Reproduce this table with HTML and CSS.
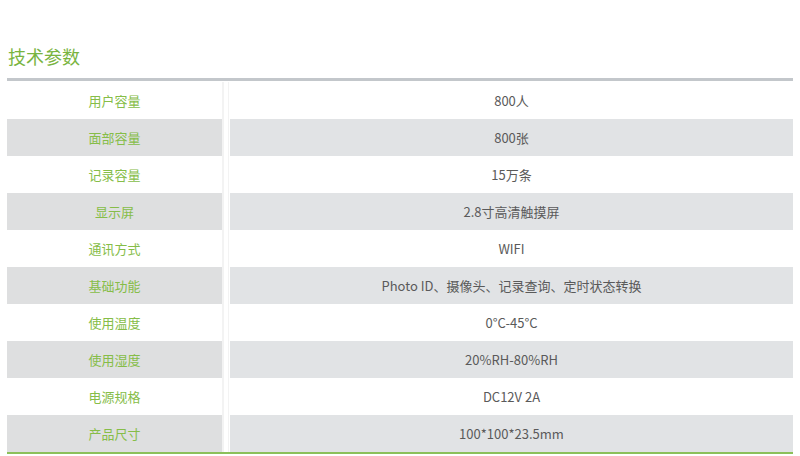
FILE: index.html
```html
<!DOCTYPE html>
<html lang="zh">
<head>
<meta charset="utf-8">
<link rel="stylesheet" href="styles.css">
</head>
<body>
<div class="page">
  <h2 class="title">技术参数</h2>
  <div class="table">
    <div class="row"><div class="key">用户容量</div><div class="sep"></div><div class="val">800人</div></div>
    <div class="row alt"><div class="key">面部容量</div><div class="sep"></div><div class="val">800张</div></div>
    <div class="row"><div class="key">记录容量</div><div class="sep"></div><div class="val">15万条</div></div>
    <div class="row alt"><div class="key">显示屏</div><div class="sep"></div><div class="val">2.8寸高清触摸屏</div></div>
    <div class="row"><div class="key">通讯方式</div><div class="sep"></div><div class="val">WIFI</div></div>
    <div class="row alt"><div class="key">基础功能</div><div class="sep"></div><div class="val">Photo ID、摄像头、记录查询、定时状态转换</div></div>
    <div class="row"><div class="key">使用温度</div><div class="sep"></div><div class="val">0°C-45°C</div></div>
    <div class="row alt"><div class="key">使用湿度</div><div class="sep"></div><div class="val">20%RH-80%RH</div></div>
    <div class="row"><div class="key">电源规格</div><div class="sep"></div><div class="val">DC12V 2A</div></div>
    <div class="row alt"><div class="key">产品尺寸</div><div class="sep"></div><div class="val">100*100*23.5mm</div></div>
  </div>
</div>
</body>
</html>
```
FILE: styles.css
```css
html, body {
  margin: 0;
  padding: 0;
  background: #fff;
}
.page {
  padding: 0 7px;
  font-family: "Noto Sans CJK SC", "Noto Sans", sans-serif;
}
.title {
  margin: 0;
  padding-top: 44px;
  height: 34px;
  box-sizing: content-box;
  font-size: 18px;
  line-height: 24px;
  font-weight: 400;
  color: #79b43f;
  padding-left: 1px;
  height: 34px;
}
.table {
  border-top: 3px solid #c3c7cb;
  padding-top: 1px;
  border-bottom: 2px solid #8cc05a;
}
.row {
  display: grid;
  grid-template-columns: 215px 8px 1fr;
  height: 37px;
  font-size: 13px;
}
.key, .val {
  display: flex;
  align-items: center;
  justify-content: center;
}
.key {
  color: #86bd48;
}
.val {
  color: #5a5a5a;
}
.sep {
  border-left: 2px solid #f3f3f3;
  border-right: 1px solid #f3f3f3;
  margin-right: 1px;
}
.row.alt .key {
  background: #dedfe0;
}
.row.alt .val {
  background: #e1e3e5;
}
```
